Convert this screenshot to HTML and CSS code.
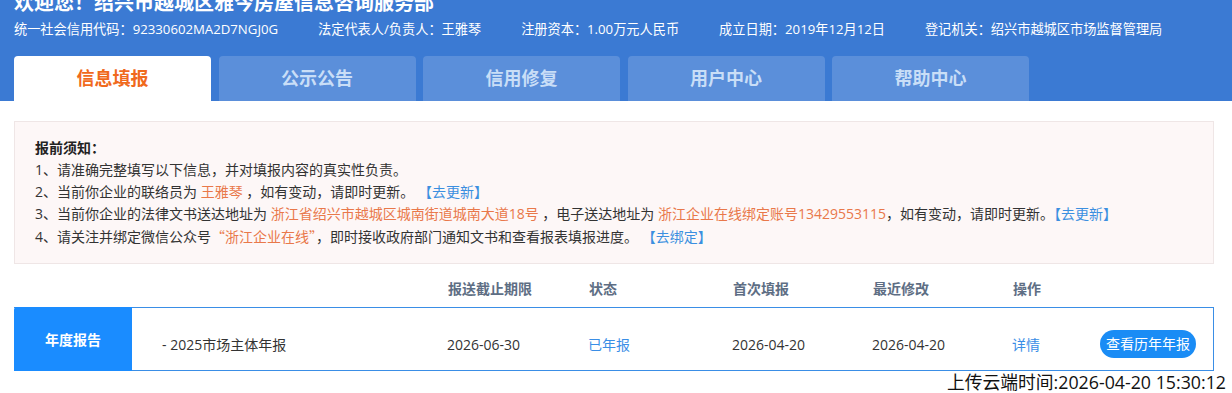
FILE: index.html
```html
<!DOCTYPE html>
<html lang="zh-CN">
<head>
<meta charset="utf-8">
<title>信息填报</title>
<link rel="stylesheet" href="styles.css">
</head>
<body>
<header class="header">
  <div class="title">欢迎您！绍兴市越城区雅今房屋信息咨询服务部</div>
  <div class="info">
    <span>统一社会信用代码：92330602MA2D7NGJ0G</span>
    <span>法定代表人/负责人：王雅琴</span>
    <span>注册资本：1.00万元人民币</span>
    <span>成立日期：2019年12月12日</span>
    <span>登记机关：绍兴市越城区市场监督管理局</span>
  </div>
  <nav class="tabs">
    <div class="tab active">信息填报</div>
    <div class="tab">公示公告</div>
    <div class="tab">信用修复</div>
    <div class="tab">用户中心</div>
    <div class="tab">帮助中心</div>
  </nav>
</header>
<main class="main">
  <section class="notice">
    <div class="notice-title">报前须知：</div>
    <div class="line">1、请准确完整填写以下信息，并对填报内容的真实性负责。</div>
    <div class="line">2、当前你企业的联络员为 <span class="hl">王雅琴</span> ，如有变动，请即时更新。 <span class="link">【去更新】</span></div>
    <div class="line">3、当前你企业的法律文书送达地址为 <span class="hl">浙江省绍兴市越城区城南街道城南大道18号</span> ，电子送达地址为 <span class="hl">浙江企业在线绑定账号13429553115</span>，如有变动，请即时更新。<span class="link">【去更新】</span></div>
    <div class="line">4、请关注并绑定微信公众号<span class="hl cjk">“浙江企业在线”</span>，即时接收政府部门通知文书和查看报表填报进度。 <span class="link">【去绑定】</span></div>
  </section>

  <div class="thead">
    <div></div>
    <div></div>
    <div>报送截止期限</div>
    <div>状态</div>
    <div>首次填报</div>
    <div>最近修改</div>
    <div>操作</div>
    <div></div>
  </div>
  <div class="row">
    <div class="cat">年度报告</div>
    <div class="cell name">- 2025市场主体年报</div>
    <div class="cell">2026-06-30</div>
    <div class="cell blue">已年报</div>
    <div class="cell">2026-04-20</div>
    <div class="cell">2026-04-20</div>
    <div class="cell blue">详情</div>
    <div class="cell"><span class="btn">查看历年年报</span></div>
  </div>
</main>
<div class="upload">上传云端时间:2026-04-20 15:30:12</div>
</body>
</html>
```

FILE: styles.css
```css
* { box-sizing: border-box; }
html, body { margin: 0; padding: 0; }
body {
  font-family: "Open Sans", "Noto Sans CJK SC", sans-serif;
  color: #333;
  background: #fff;
  overflow: hidden;
}
.cjk { font-family: "Noto Sans CJK SC", sans-serif; }
.header {
  display: flow-root;
  background: #3b7ad3;
  height: 101px;
  padding-left: 14px;
  color: #fff;
}
.title {
  font-family: "Noto Sans CJK SC", sans-serif;
  font-size: 20px;
  font-weight: bold;
  line-height: 30px;
  margin-top: -13px;
  height: 30px;
  white-space: nowrap;
}
.info {
  display: flex;
  gap: 40px;
  font-size: 13.2px;
  line-height: 24px;
  height: 24px;
  white-space: nowrap;
}
.tabs {
  display: flex;
  gap: 7.5px;
  margin-top: 15px;
}
.tab {
  width: 197px;
  height: 45px;
  line-height: 45px;
  text-align: center;
  font-size: 18px;
  font-weight: bold;
  background: #5b8fda;
  color: #c9def7;
  border-radius: 4px 4px 0 0;
}
.tab.active {
  background: #fff;
  color: #f0691c;
}
.main {
  padding-left: 14px;
  width: 1214px;
}
.notice {
  margin-top: 20px;
  background: #fdf7f7;
  border: 1px solid #efe6e6;
  padding: 15px 20px 15px;
  font-size: 14px;
  line-height: 22px;
  white-space: nowrap;
}
.notice-title {
  font-weight: bold;
  color: #222;
}
.hl { color: #e9784a; }
.link { color: #3b8fe0; }
.thead, .row {
  display: grid;
  grid-template-columns: 118px 315px 141px 144px 140px 140px 88px 1fr;
}
.thead {
  margin-top: 11px;
  padding: 0 1px;
  height: 28px;
  line-height: 28px;
  font-size: 14px;
  font-weight: bold;
  color: #5e6e84;
}
.row {
  margin-top: 4px;
  height: 64px;
  border: 1px solid #3a8ee6;
  border-left: 0;
  font-size: 14px;
  color: #333;
}
.cat {
  background: #1a8cff;
  color: #fff;
  font-weight: bold;
  display: flex;
  align-items: center;
  justify-content: center;
  border-radius: 3px 0 0 0;
  margin: -1px 0;
}
.cell {
  display: flex;
  align-items: center;
  padding-top: 10px;
}
.name { padding-left: 30px; }
.blue { color: #3a8ee6; }
.btn {
  display: inline-block;
  width: 96px;
  height: 28px;
  line-height: 28px;
  text-align: center;
  background: #1a8cf5;
  color: #fff;
  border-radius: 14px;
  font-size: 14px;
}
.upload {
  text-align: right;
  padding-right: 6px;
  font-size: 17.8px;
  line-height: 22px;
  color: #111;
}
```
